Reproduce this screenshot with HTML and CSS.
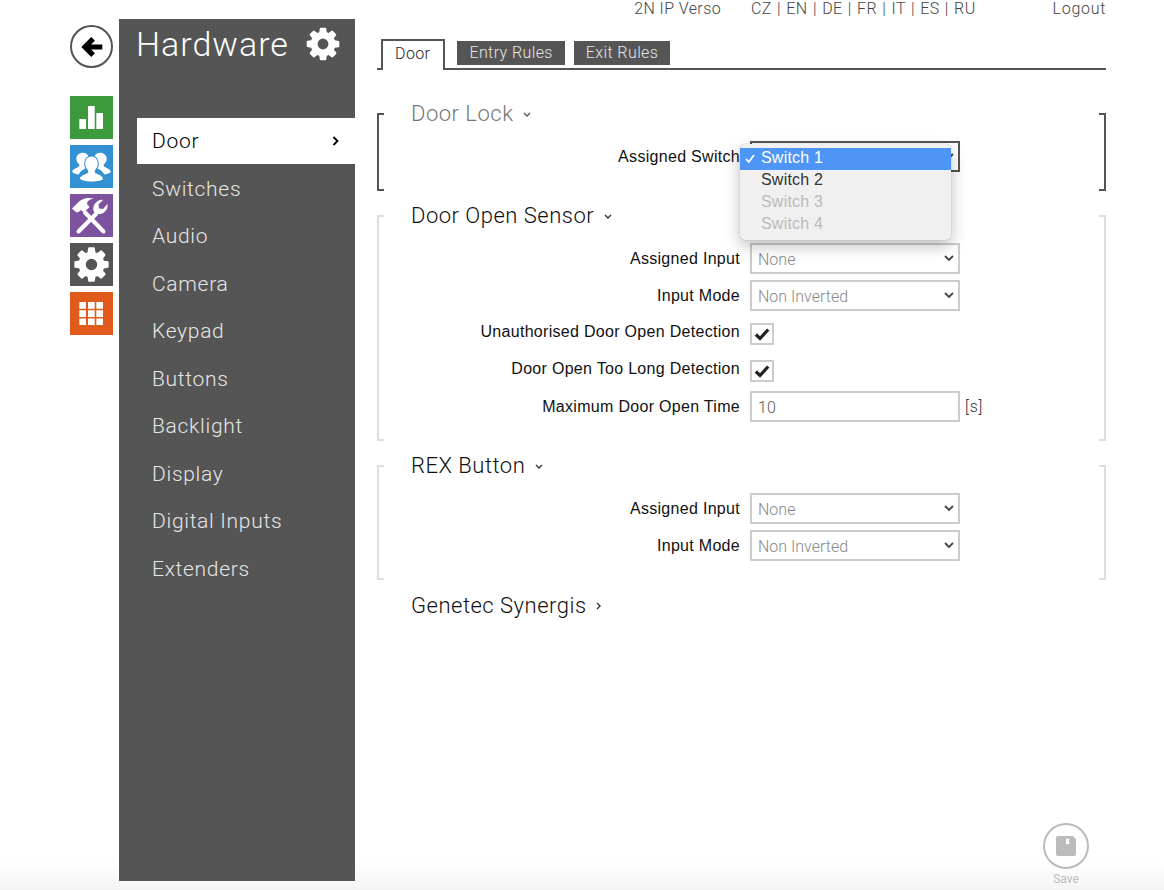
FILE: index.html
```html
<!DOCTYPE html>
<html>
<head>
	<title>Hardware</title>
	<link rel="stylesheet" href="styles.css">
</head>
<body>
	<div class="page">
		<div class="rail">
			<a class="back">
				<svg viewBox="0 0 24 24" width="26" height="26"><path d="M21.500 12H7M13 4.500L5.500 12l7.500 7.500" fill="none" stroke="#000" stroke-width="4.800"/></svg>
			</a>
			<a class="tile green">
				<svg viewBox="0 0 43 43"><path d="M9.300 23H16V33H9.300zM18 10H24.700V33H18zM26.300 17H33V33H26.300z" fill="#fff"/></svg>
			</a>
			<a class="tile blue">
				<svg viewBox="0 0 43 43">
					<path d="M13 7.700c3.600 0 6 2.800 6 6.300 0 3-1.200 5-2.800 6.500v2.500c-3 1.500-6 3-7.500 6.500C5.500 29 2.300 28 2.300 26.500c0-2.500 5.500-3.500 7-5.500V19.500c-1.800-1.500-3-3.500-3-6 0-3.200 3-5.800 6.700-5.800z" fill="#fff"/>
					<path d="M30 7.700c-3.600 0-6 2.800-6 6.300 0 3 1.200 5 2.800 6.500v2.500c3 1.500 6 3 7.500 6.500 3.200-.5 6.400-1.500 6.400-3 0-2.500-5.500-3.500-7-5.500V19.500c1.800-1.500 3-3.500 3-6 0-3.200-3-5.800-6.700-5.800z" fill="#fff"/>
					<path d="M21.500 11.500c3.800 0 6.300 3 6.300 6.800 0 3-1.300 5.600-3 7.200v2c1.800 1.800 8.200 3.200 8.200 6 0 2-5.500 3-11.500 3S10 35 10 33.500c0-2.800 6.400-4.200 8.200-6v-2c-1.700-1.600-3-4.200-3-7.200 0-3.800 2.500-6.800 6.300-6.800z" fill="#fff" stroke="#3390d2" stroke-width="2" paint-order="stroke"/>
				</svg>
			</a>
			<a class="tile purple">
				<svg viewBox="0 0 43 43"><path d="M8.500 37.500L26 20" stroke="#fff" stroke-width="4" stroke-linecap="round" fill="none"/><path d="M26 20l-2-2c-1.500-3.500-.5-7 2-9.500 2-2 4.500-3 7-2.500l-4.500 4.500.5 4 4 .5L37.500 10c.5 3-.5 5.500-2.500 7.500-2.500 2.500-5 3-7 2.500z" fill="#fff"/><path d="M33.500 37.500L15 18.500" stroke="#fff" stroke-width="4" stroke-linecap="round" fill="none"/><path d="M2 14.500L8 8.500C12 4.500 17 3 23.500 4.500 19 5.500 17 7.500 17 10l2.500 3-5.500 5.500-3-2.500-2.500 2-2 .5z" fill="#fff"/></svg>
			</a>
			<a class="tile dark">
				<svg viewBox="0 0 1792 1792" class="cog"><path d="M1152 896q0-106-75-181t-181-75-181 75-75 181 75 181 181 75 181-75 75-181zm512-109v222q0 12-8 23t-20 13l-185 28q-19 54-39 91 35 50 107 138 10 12 10 25t-9 23q-27 37-99 108t-94 71q-12 0-26-9l-138-108q-44 23-91 38-16 136-29 186-7 28-36 28h-222q-14 0-24.500-8.500t-11.500-21.500l-28-184q-49-16-90-37l-141 107q-10 9-25 9-14 0-25-11-126-114-165-168-7-10-7-23 0-12 8-23 15-21 51-66.500t54-70.500q-27-50-41-99l-183-27q-13-2-21-12.500t-8-23.500v-222q0-12 8-23t19-13l186-28q14-46 39-92-40-57-107-138-10-12-10-24 0-10 9-23 26-36 98.500-107.500t94.500-71.500q13 0 26 10l138 107q44-23 91-38 16-136 29-186 7-28 36-28h222q14 0 24.500 8.500t11.500 21.500l28 184q49 16 90 37l142-107q9-9 24-9 13 0 25 10 129 119 165 170 7 8 7 22 0 12-8 23-15 21-51 66.500t-54 70.500q26 50 41 98l183 28q13 2 21 12.500t8 23.500z" fill="#fff"/></svg>
			</a>
			<a class="tile orange">
				<svg viewBox="0 0 43 43"><path d="M9.300 10H16V16.700H9.300zM18 10H24.700V16.700H18zM26.300 10H33V16.700H26.300zM9.300 18.300H16V25H9.300zM18 18.300H24.700V25H18zM26.300 18.300H33V25H26.300zM9.300 26.500H16V33H9.300zM18 26.500H24.700V33H18zM26.300 26.500H33V33H26.300z" fill="#fff"/></svg>
			</a>
		</div>

		<div class="sidebar">
			<div class="sidebar-head">
				<span class="sidebar-title">Hardware</span>
				<svg viewBox="0 0 1792 1792" width="38" height="38"><path d="M1152 896q0-106-75-181t-181-75-181 75-75 181 75 181 181 75 181-75 75-181zm512-109v222q0 12-8 23t-20 13l-185 28q-19 54-39 91 35 50 107 138 10 12 10 25t-9 23q-27 37-99 108t-94 71q-12 0-26-9l-138-108q-44 23-91 38-16 136-29 186-7 28-36 28h-222q-14 0-24.500-8.500t-11.500-21.500l-28-184q-49-16-90-37l-141 107q-10 9-25 9-14 0-25-11-126-114-165-168-7-10-7-23 0-12 8-23 15-21 51-66.500t54-70.500q-27-50-41-99l-183-27q-13-2-21-12.500t-8-23.500v-222q0-12 8-23t19-13l186-28q14-46 39-92-40-57-107-138-10-12-10-24 0-10 9-23 26-36 98.500-107.500t94.500-71.500q13 0 26 10l138 107q44-23 91-38 16-136 29-186 7-28 36-28h222q14 0 24.500 8.500t11.500 21.500l28 184q49 16 90 37l142-107q9-9 24-9 13 0 25 10 129 119 165 170 7 8 7 22 0 12-8 23-15 21-51 66.500t-54 70.500q26 50 41 98l183 28q13 2 21 12.500t8 23.500z" fill="#fff"/></svg>
			</div>
			<ul class="menu">
				<li class="active">Door
					<svg viewBox="0 0 8 10" width="8" height="10"><path d="M1.500 1L5.500 5l-4 4" fill="none" stroke="#000" stroke-width="1.800"/></svg>
				</li>
				<li>Switches</li>
				<li>Audio</li>
				<li>Camera</li>
				<li>Keypad</li>
				<li>Buttons</li>
				<li>Backlight</li>
				<li>Display</li>
				<li>Digital Inputs</li>
				<li>Extenders</li>
			</ul>
		</div>

		<div class="main">
			<div class="topnav">
				<span>2N IP Verso</span>
				<span class="langs">CZ | EN | DE | FR | IT | ES | RU</span>
				<span class="logout">Logout</span>
			</div>

			<div class="tabs">
				<a class="tab current">Door</a>
				<a class="tab">Entry Rules</a>
				<a class="tab">Exit Rules</a>
			</div>

			<div class="section focused">
				<h2 class="muted">Door Lock
					<svg viewBox="0 0 8 6" width="8" height="6"><path d="M1 1l3 3 3-3" fill="none" stroke="#555" stroke-width="1.400"/></svg>
				</h2>
				<div class="row">
					<label>Assigned Switch</label>
					<select class="field dark"><option>Switch 1</option></select>
				</div>
			</div>

			<div class="section">
				<h2>Door Open Sensor
					<svg viewBox="0 0 8 6" width="8" height="6"><path d="M1 1l3 3 3-3" fill="none" stroke="#333" stroke-width="1.400"/></svg>
				</h2>
				<div class="row">
					<label>Assigned Input</label>
					<select class="field"><option>None</option></select>
				</div>
				<div class="row">
					<label>Input Mode</label>
					<select class="field"><option>Non Inverted</option></select>
				</div>
				<div class="row check-row">
					<label>Unauthorised Door Open Detection</label>
					<span class="check">
						<svg viewBox="0 0 16 14" width="16" height="14"><path d="M1.800 7.500L6 11.500 14.200 2.500" fill="none" stroke="#222" stroke-width="3.200"/></svg>
					</span>
				</div>
				<div class="row check-row">
					<label>Door Open Too Long Detection</label>
					<span class="check">
						<svg viewBox="0 0 16 14" width="16" height="14"><path d="M1.800 7.500L6 11.500 14.200 2.500" fill="none" stroke="#222" stroke-width="3.200"/></svg>
					</span>
				</div>
				<div class="row">
					<label>Maximum Door Open Time</label>
					<input class="field" type="text" value="10">
					<span class="unit">[s]</span>
				</div>
			</div>

			<div class="section">
				<h2>REX Button
					<svg viewBox="0 0 8 6" width="8" height="6"><path d="M1 1l3 3 3-3" fill="none" stroke="#333" stroke-width="1.400"/></svg>
				</h2>
				<div class="row">
					<label>Assigned Input</label>
					<select class="field"><option>None</option></select>
				</div>
				<div class="row">
					<label>Input Mode</label>
					<select class="field"><option>Non Inverted</option></select>
				</div>
			</div>

			<h2 class="collapsed">Genetec Synergis
				<svg viewBox="0 0 6 8" width="6" height="8"><path d="M1 1l3 3-3 3" fill="none" stroke="#333" stroke-width="1.400"/></svg>
			</h2>
		</div>
	</div>

	<!-- open select list, lies over the Door Lock field -->
	<div class="popup">
		<div class="opt selected">
			<svg class="tick" viewBox="0 0 10 9" width="10" height="9"><path d="M1 5l2.800 3L9 1" fill="none" stroke="#fff" stroke-width="1.700"/></svg>
			Switch 1
		</div>
		<div class="opt">Switch 2</div>
		<div class="opt off">Switch 3</div>
		<div class="opt off">Switch 4</div>
	</div>

	<div class="bottom-fade"></div>

	<a class="save">
		<span class="save-ring">
			<svg viewBox="0 0 20 20" width="20" height="20"><path d="M2 0H17L20 3V18a2 2 0 0 1-2 2H2a2 2 0 0 1-2-2V2a2 2 0 0 1 2-2zM10 2.700V8.300H13.300V2.700z" fill="#bbb" fill-rule="evenodd"/></svg>
		</span>
		Save
	</a>
</body>
</html>
```

FILE: styles.css
```css
html, body {
	margin: 0;
	height: 890px;
	overflow: hidden;
	background: #fff;
}

body {
	position: relative;
	font-family: "Liberation Sans", Arial, sans-serif;
	font-size: 16px;
	color: #111;
}

.page {
	display: flex;
	padding-left: 70px;
}

/* left icon column */

.rail {
	width: 43px;
	margin-right: 6px;
	padding-top: 25px;
	display: flex;
	flex-direction: column;
	gap: 6px;
}

.back {
	width: 43px;
	height: 43px;
	margin-bottom: 22px;
	box-sizing: border-box;
	border: 2px solid #555;
	border-radius: 50%;
	display: flex;
	align-items: center;
	justify-content: center;
}

.tile {
	width: 43px;
	height: 43px;
	display: block;
}

.tile svg {
	display: block;
	width: 43px;
	height: 43px;
}

.tile .cog {
	width: 40px;
	height: 40px;
	padding: 1.500px;
}

.green { background: #3a9a3c; }
.blue { background: #3390d2; }
.purple { background: #7d539f; }
.dark { background: #555; }
.orange { background: #e05a1b; }

/* sidebar */

.sidebar {
	position: relative;
	z-index: 1;
	width: 236px;
	height: 862px;
	margin-top: 19px;
	background: #555;
	color: #e6e6e6;
	font-family: Roboto, sans-serif;
	font-weight: 300;
}

.sidebar-head {
	height: 50px;
	padding-left: 17px;
	display: flex;
	align-items: center;
	color: #fff;
}

.sidebar-head svg {
	margin-left: 15px;
}

.sidebar-title {
	font-size: 34px;
	letter-spacing: 1px;
}

.menu {
	list-style: none;
	margin: 49px 0 0 18px;
	padding: 0;
}

.menu li {
	height: 47.500px;
	line-height: 46px;
	padding: 0 15px;
	font-size: 21px;
	letter-spacing: 0.7px;
	display: flex;
	align-items: center;
	justify-content: space-between;
}

.menu li.active {
	height: 46px;
	margin-bottom: 1.200px;
	background: #fff;
	color: #000;
}

/* main column */

.main {
	width: 729px;
	margin-left: 22px;
}

.topnav {
	height: 18px;
	line-height: 17px;
	display: flex;
	justify-content: flex-end;
	font-family: Roboto, sans-serif;
	font-weight: 300;
	letter-spacing: 0.4px;
	color: #444;
}

.langs {
	margin-left: 30px;
	word-spacing: 1px;
}

.logout {
	margin-left: 77px;
	letter-spacing: 0.7px;
}

.tabs {
	height: 51px;
	box-sizing: border-box;
	margin-top: 1px;
	padding: 20px 0 0 4px;
	border-bottom: 2px solid #555;
	display: flex;
	align-items: flex-start;
	font-family: Roboto, sans-serif;
	font-weight: 300;
	letter-spacing: 0.4px;
}

.tab {
	height: 24px;
	line-height: 24px;
	margin: 2px 9px 0 0;
	padding: 0 12px;
	background: #555;
	color: #e6e6e6;
}

.tab.current {
	height: 29px;
	line-height: 25px;
	margin: 0 12px -2px 0;
	padding: 0 13px 0 12px;
	border: 2px solid #555;
	border-bottom: 0;
	background: #fff;
	color: #222;
}

/* bracketed sections */

.section {
	position: relative;
	display: flow-root;
	margin: 24px 0 0;
	padding-bottom: 19px;
}

.tabs + .section {
	margin-top: 43px;
}

.section::before,
.section::after {
	content: "";
	position: absolute;
	top: 0;
	bottom: 0;
	width: 5px;
	border: 2px solid #ddd;
}

.section::before {
	left: 0;
	border-right: 0;
}

.section::after {
	right: 0;
	border-left: 0;
}

.section.focused::before,
.section.focused::after {
	border-color: #555;
}

h2 {
	margin: -13px 0 13px 34px;
	height: 28px;
	line-height: 28px;
	font-family: Roboto, sans-serif;
	font-size: 22px;
	font-weight: 300;
	letter-spacing: 0.5px;
	color: #111;
}

h2 svg {
	margin-left: 4px;
	vertical-align: 3px;
}

h2.muted {
	color: #777;
}

h2.collapsed {
	margin-top: 12px;
}

.row {
	height: 31px;
	margin-bottom: 6px;
	display: flex;
	align-items: center;
}

.row:last-child {
	margin-bottom: 0;
}

.row label {
	width: 363px;
	margin-right: 10px;
	margin-top: 1px;
	text-align: right;
	letter-spacing: 0.3px;
}

.check-row label {
	margin-top: -1px;
}

.field {
	width: 210px;
	height: 31px;
	box-sizing: border-box;
	margin: 0;
	padding: 2px 6px 0;
	border: 2px solid #ccc;
	border-radius: 0;
	outline: 0;
	background: #fff;
	font-family: Roboto, sans-serif;
	font-size: 16px;
	font-weight: 300;
	color: #888;
	appearance: none;
}

select.field {
	background: #fff url("data:image/svg+xml,%3Csvg xmlns='http://www.w3.org/2000/svg' width='10' height='7'%3E%3Cpath d='M1 1l4 4 4-4' fill='none' stroke='%23444' stroke-width='1.800'/%3E%3C/svg%3E") no-repeat right 4px center;
}

input.field {
	color: #555;
}

.field.dark {
	border-color: #555;
}

.check {
	width: 24px;
	height: 22px;
	margin-top: 3px;
	box-sizing: border-box;
	border: 2px solid #ccc;
	display: flex;
	align-items: center;
	justify-content: center;
}

.unit {
	margin-left: 5px;
	font-family: Roboto, sans-serif;
	font-weight: 300;
	letter-spacing: 0.8px;
	color: #333;
}

/* open select list */

.popup {
	position: absolute;
	left: 740px;
	top: 144px;
	width: 211px;
	height: 96px;
	box-sizing: border-box;
	padding-top: 4px;
	border-radius: 5px;
	background: #f0f0f0;
	box-shadow: 0 0 1px rgba(0, 0, 0, 0.35), 0 6px 16px rgba(0, 0, 0, 0.25);
	letter-spacing: 0.2px;
}

.opt {
	position: relative;
	height: 22px;
	line-height: 20px;
	padding-left: 21px;
	color: #333;
}

.opt.selected {
	background: #4d96f5;
	color: #fff;
}

.opt.off {
	color: #bbb;
}

.tick {
	position: absolute;
	left: 5px;
	top: 6px;
}

/* bottom of the window */

.bottom-fade {
	position: absolute;
	left: 0;
	right: 0;
	bottom: 0;
	height: 30px;
	background: linear-gradient(#fff, #f4f4f4);
	pointer-events: none;
}

.save {
	position: absolute;
	left: 1043px;
	top: 823px;
	width: 46px;
	display: flex;
	flex-direction: column;
	align-items: center;
	gap: 3px;
	font-family: Roboto, sans-serif;
	font-size: 12px;
	color: #bbb;
}

.save-ring {
	width: 46px;
	height: 46px;
	box-sizing: border-box;
	border: 2px solid #bbb;
	border-radius: 50%;
	display: flex;
	align-items: center;
	justify-content: center;
}
```
